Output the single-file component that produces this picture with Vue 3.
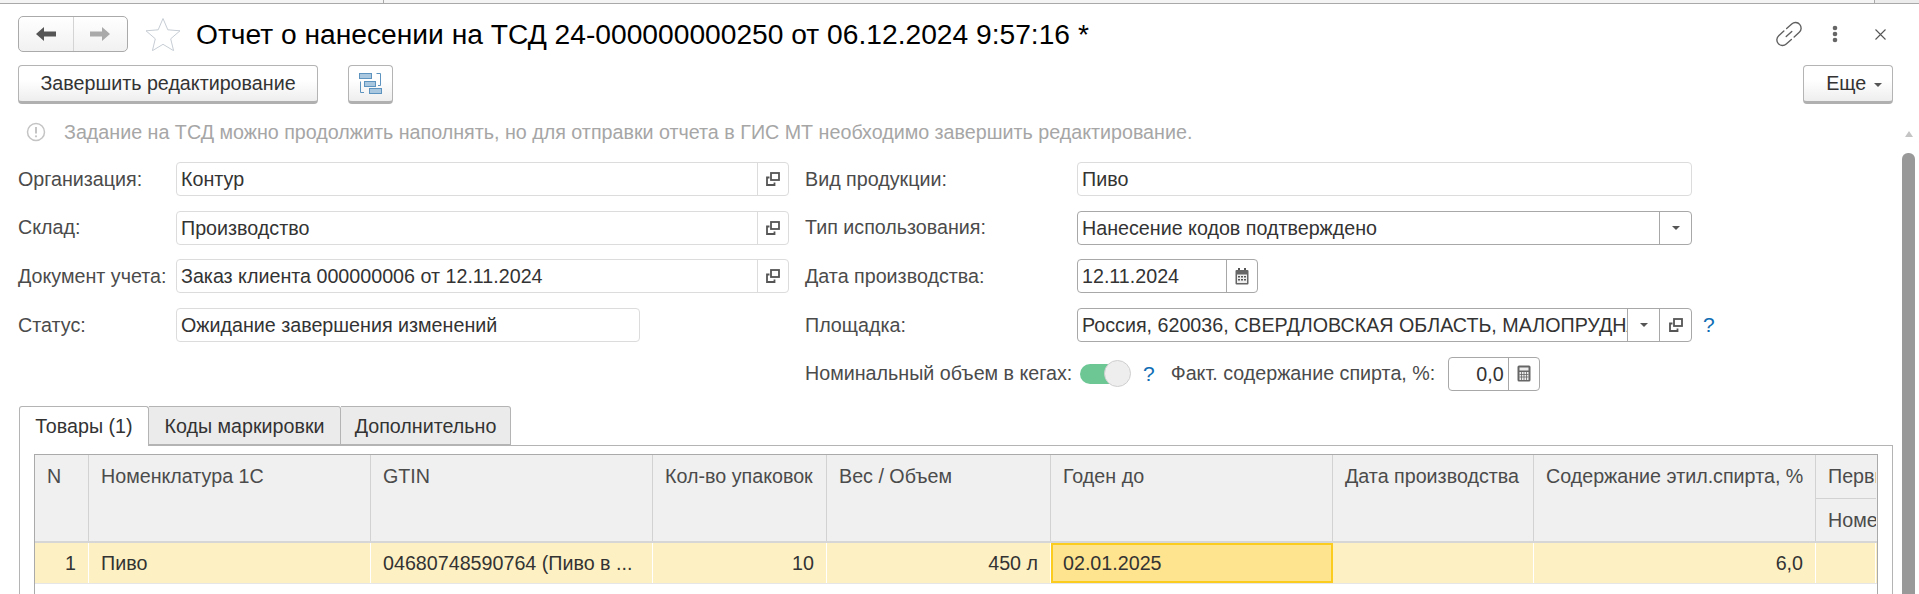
<script setup>
const columns = [
  { title: 'N', value: '1', right: true },
  { title: 'Номенклатура 1С', value: 'Пиво' },
  { title: 'GTIN', value: '04680748590764 (Пиво в ...' },
  { title: 'Кол-во упаковок', value: '10', right: true },
  { title: 'Вес / Объем', value: '450 л', right: true },
  { title: 'Годен до', value: '02.01.2025', active: true },
  { title: 'Дата производства', value: '' },
  { title: 'Содержание этил.спирта, %', value: '6,0', right: true }
]
</script>

<template>
  <div class="page">
    <div class="strip">
      <div class="strip-a"></div>
      <div class="strip-b"></div>
      <div class="strip-c"></div>
    </div>

    <div class="workspace">
      <div class="content">
        <header class="head">
          <div class="nav">
            <button class="nav-btn">
              <svg width="22" height="16" viewBox="0 0 22 16"><path d="M9 1 1 8l8 7v-4.500h12v-5H9z" fill="#555"/></svg>
            </button>
            <button class="nav-btn">
              <svg width="22" height="16" viewBox="0 0 22 16"><path d="M13 1l8 7-8 7v-4.500H1v-5h12z" fill="#aaa"/></svg>
            </button>
          </div>
          <svg class="star" width="36" height="34" viewBox="0 0 36 34"><path d="M18 1.500l4.800 11.300 12.200 1-9.300 8 2.900 11.900L18 27.300 7.400 33.700l2.900-11.900-9.300-8 12.200-1z" fill="#fff" stroke="#c6cdd4"/></svg>
          <h1 class="title">Отчет о нанесении на ТСД 24-000000000250 от 06.12.2024 9:57:16 *</h1>
          <div class="head-icons">
            <svg width="30" height="30" viewBox="0 0 24 24" fill="none" stroke="#5f5f5f" stroke-width="1.100" stroke-linecap="round">
              <g transform="rotate(-42 12 12)">
                <path d="M10.500 7.500H5a4.500 4.500 0 0 0 0 9h5.500"/>
                <path d="M13.500 7.500H19a4.500 4.500 0 0 1 0 9h-5.500"/>
                <path d="M9 12h6"/>
              </g>
            </svg>
            <svg class="dots" width="6" height="18" viewBox="0 0 6 18" fill="#666"><circle cx="3" cy="3" r="2.300"/><circle cx="3" cy="9" r="2.300"/><circle cx="3" cy="15" r="2.300"/></svg>
            <svg class="close" width="11" height="11" viewBox="0 0 11 11" stroke="#555" stroke-width="1.100"><path d="M.5.500l10 10M10.500.500l-10 10"/></svg>
          </div>
        </header>

        <div class="commands">
          <button class="btn btn-finish">Завершить редактирование</button>
          <button class="btn btn-icon">
            <svg width="23" height="21" viewBox="0 0 23 21" fill="none" stroke="#5d94bf">
              <path d="M1.500 8.500v11H5M17.500.500h4v12H19"/>
              <rect x="0.500" y="0.500" width="12" height="5" fill="#a9c8e0"/>
              <rect x="5.500" y="8.500" width="11" height="5" fill="#a9c8e0"/>
              <rect x="10.500" y="15.500" width="12" height="5" fill="#a9c8e0"/>
            </svg>
          </button>
          <button class="btn btn-more">Еще <span class="caret small"></span></button>
        </div>

        <div class="info">
          <svg width="20" height="20" viewBox="0 0 20 20"><circle cx="10" cy="10" r="8.500" fill="#fff" stroke="#c4c4c4" stroke-width="1.500"/><path d="M10 5v6.500" stroke="#c4c4c4" stroke-width="2"/><circle cx="10" cy="14.300" r="1.100" fill="#c4c4c4"/></svg>
          <span>Задание на ТСД можно продолжить наполнять, но для отправки отчета в ГИС МТ необходимо завершить редактирование.</span>
        </div>

        <div class="form">
          <div class="form-col left">
            <div class="row">
              <label class="lbl">Организация:</label>
              <div class="field wide"><span class="val">Контур</span><span class="act"><svg class="open" viewBox="0 0 14 14"><path d="M3.500 5.500h-2.500v7.500h7.500v-2.500"/><rect x="5" y="1" width="8" height="7"/></svg></span></div>
            </div>
            <div class="row">
              <label class="lbl">Склад:</label>
              <div class="field wide"><span class="val">Производство</span><span class="act"><svg class="open" viewBox="0 0 14 14"><path d="M3.500 5.500h-2.500v7.500h7.500v-2.500"/><rect x="5" y="1" width="8" height="7"/></svg></span></div>
            </div>
            <div class="row">
              <label class="lbl">Документ учета:</label>
              <div class="field wide"><span class="val">Заказ клиента 000000006 от 12.11.2024</span><span class="act"><svg class="open" viewBox="0 0 14 14"><path d="M3.500 5.500h-2.500v7.500h7.500v-2.500"/><rect x="5" y="1" width="8" height="7"/></svg></span></div>
            </div>
            <div class="row">
              <label class="lbl">Статус:</label>
              <div class="field status"><span class="val">Ожидание завершения изменений</span></div>
            </div>
          </div>

          <div class="form-col right">
            <div class="row">
              <label class="lbl">Вид продукции:</label>
              <div class="field long"><span class="val">Пиво</span></div>
            </div>
            <div class="row">
              <label class="lbl">Тип использования:</label>
              <div class="field long edit"><span class="val">Нанесение кодов подтверждено</span><span class="act act-drop"><span class="caret"></span></span></div>
            </div>
            <div class="row">
              <label class="lbl">Дата производства:</label>
              <div class="field date edit">
                <span class="val">12.11.2024</span>
                <span class="act act-date">
                  <svg width="14" height="17" viewBox="0 0 14 17"><path d="M3 0h2v3H3zM9 0h2v3H9z" fill="#555"/><rect x="0.500" y="2" width="13" height="14.500" rx="1" fill="#666"/><rect x="2" y="6.500" width="10" height="8.500" fill="#eee"/><path d="M3 8h2v1.500H3zM6 8h2v1.500H6zM9 8h2v1.500H9zM3 11h2v1.500H3zM6 11h2v1.500H6zM9 11h2v1.500H9z" fill="#555"/></svg>
                </span>
              </div>
            </div>
            <div class="row">
              <label class="lbl">Площадка:</label>
              <div class="field long edit">
                <span class="val">Россия, 620036, СВЕРДЛОВСКАЯ ОБЛАСТЬ, МАЛОПРУДНАЯ</span>
                <span class="act act-drop"><span class="caret"></span></span>
                <span class="act act-drop"><svg class="open" viewBox="0 0 14 14"><path d="M3.500 5.500h-2.500v7.500h7.500v-2.500"/><rect x="5" y="1" width="8" height="7"/></svg></span>
              </div>
              <span class="hint hint-place">?</span>
            </div>
            <div class="row">
              <label class="lbl">Номинальный объем в кегах:</label>
              <div class="toggle"><span class="knob"></span></div>
              <span class="hint hint-toggle">?</span>
              <span class="lbl-fact">Факт. содержание спирта, %:</span>
              <div class="field fact edit">
                <span class="val val-num">0,0</span>
                <span class="act act-calc">
                  <svg width="14" height="17" viewBox="0 0 14 17"><rect x="0.500" y="0.500" width="13" height="16" rx="1.500" fill="#666"/><rect x="2.500" y="2.500" width="9" height="3" fill="#eee"/><rect x="2.500" y="7" width="9" height="8" fill="#eee"/><path d="M4.500 7v8M7 7v8M9.500 7v8M2.500 9.500h9M2.500 12h9" stroke="#666" stroke-width=".8"/></svg>
                </span>
              </div>
            </div>
          </div>
        </div>

        <div class="tabs">
          <div class="tab current">Товары (1)</div>
          <div class="tab t2">Коды маркировки</div>
          <div class="tab t3">Дополнительно</div>
        </div>

        <div class="panel">
          <div class="table">
            <div class="grid head-row">
              <div v-for="c in columns" :key="c.title" class="th">{{ c.title }}</div>
              <div class="th th-split">
                <div class="sub">Первичный</div>
                <div class="sub">Номер</div>
              </div>
            </div>
            <div class="grid data-row">
              <div
                v-for="c in columns"
                :key="c.title"
                class="td"
                :class="{ right: c.right, active: c.active }"
              >{{ c.value }}</div>
              <div class="td"></div>
            </div>
          </div>
        </div>
      </div>

      <div class="scrollbar">
        <span class="arrow"></span>
        <div class="thumb"></div>
      </div>
    </div>
  </div>
</template>

<style>
html,
body {
  margin: 0;
  background: #fff;
}
</style>

<style scoped>
.page {
  width: 1919px;
  height: 594px;
  overflow: hidden;
  background: #fff;
  font-family: "Liberation Sans", Arial, sans-serif;
  font-size: 19.7px;
  color: #333;
}

.strip {
  display: flex;
  height: 3px;
  border-bottom: 1px solid #a9a9a9;
}
.strip-a {
  width: 383px;
  background: #f4f4f4;
  border-right: 1px solid #a9a9a9;
}
.strip-b {
  width: 1490px;
  background: #f4f4f4;
  border-right: 1px solid #a9a9a9;
}
.strip-c {
  flex: 1;
  background: #ececec;
}

.workspace {
  display: flex;
}
.content {
  width: 1902px;
  flex: none;
}

.head {
  display: flex;
  align-items: center;
  height: 36px;
  margin-top: 12px;
  padding-left: 18px;
}
.nav {
  display: flex;
  width: 110px;
  height: 36px;
  box-sizing: border-box;
  border: 1px solid #aaa;
  border-radius: 5px;
  background: linear-gradient(#fff, #f1f1f1);
}
.nav-btn {
  flex: 1;
  padding: 0;
  border: 0;
  background: none;
  display: flex;
  align-items: center;
  justify-content: center;
}
.nav-btn + .nav-btn {
  border-left: 1px solid #d4d4d4;
}
.star {
  margin-left: 17px;
}
.title {
  margin: 0 0 0 15px;
  font-size: 28.2px;
  font-weight: 400;
  color: #000;
  white-space: nowrap;
}
.head-icons {
  display: flex;
  align-items: center;
  margin-left: auto;
  margin-right: 16px;
}
.dots {
  margin-left: 28px;
}
.close {
  margin-left: 37px;
}

.commands {
  display: flex;
  margin-top: 13px;
  padding: 0 9px 0 18px;
}
.btn {
  height: 39px;
  box-sizing: border-box;
  padding: 0;
  border: 1px solid #b4b4b4;
  border-bottom: 3px solid #b0b0b0;
  border-radius: 4px;
  background: linear-gradient(#fff 40%, #eee);
  font: inherit;
  color: #333;
}
.btn-finish {
  width: 300px;
}
.btn-icon {
  width: 45px;
  margin-left: 30px;
  display: flex;
  align-items: center;
  justify-content: center;
}
.btn-more {
  width: 90px;
  margin-left: auto;
  padding-left: 12px;
}

.info {
  display: flex;
  align-items: center;
  gap: 18px;
  height: 32px;
  margin-top: 12px;
  margin-bottom: 14px;
  padding-left: 26px;
  color: #a6a6a6;
}

.form {
  display: flex;
  gap: 16px;
  padding-left: 18px;
}
.form-col {
  display: flex;
  flex-direction: column;
  gap: 14.7px;
}
.form-col.left {
  width: 771px;
}
.row {
  display: flex;
  align-items: center;
  height: 34px;
}
.lbl {
  flex: none;
  color: #4b4b4b;
  white-space: nowrap;
}
.left .lbl {
  width: 158px;
}
.right .lbl {
  width: 272px;
}

.field {
  display: flex;
  height: 34px;
  box-sizing: border-box;
  border: 1px solid #dcdcdc;
  border-radius: 4px;
  background: #fff;
  overflow: hidden;
}
.field.edit {
  border-color: #a8a8a8;
}
.field.wide {
  width: 613px;
}
.field.status {
  width: 464px;
}
.field.long {
  width: 615px;
}
.field.date {
  width: 181px;
}
.field.fact {
  width: 92px;
}
.val {
  flex: 1;
  min-width: 0;
  padding-left: 4px;
  line-height: 32px;
  white-space: nowrap;
  overflow: hidden;
  color: #333;
}
.val-num {
  padding: 0 4px 0 0;
  text-align: right;
}
.act {
  flex: none;
  width: 30px;
  display: flex;
  align-items: center;
  justify-content: center;
  border-left: 1px solid #dcdcdc;
}
.edit .act {
  border-left-color: #a8a8a8;
}
.act-drop {
  width: 31px;
}
.open {
  width: 14px;
  height: 14px;
  fill: none;
  stroke: #555;
  stroke-width: 1.800;
}

.caret {
  display: inline-block;
  width: 0;
  height: 0;
  border-left: 4px solid transparent;
  border-right: 4px solid transparent;
  border-top: 4px solid #555;
}
.caret.small {
  vertical-align: 3px;
  margin-left: 2px;
}

.hint {
  color: #0f6eb4;
  font-size: 21px;
}
.hint-place {
  margin-left: 11px;
}
.hint-toggle {
  margin-left: 12px;
}
.toggle {
  position: relative;
  width: 51px;
  height: 20px;
  margin-left: 3px;
  border-radius: 10px 0 0 10px;
  background: linear-gradient(90deg, #6cc795 60%, transparent 60%);
}
.knob {
  position: absolute;
  right: 0;
  top: -4px;
  width: 27px;
  height: 27px;
  box-sizing: border-box;
  border: 1px solid #cfcfcf;
  border-radius: 50%;
  background: #eee;
}
.lbl-fact {
  margin-left: 16px;
  width: 277px;
  flex: none;
  color: #4b4b4b;
  white-space: nowrap;
}

.tabs {
  display: flex;
  height: 39px;
  margin-top: 15px;
  margin-left: 19px;
}
.tab {
  box-sizing: border-box;
  height: 39px;
  padding-top: 8px;
  text-align: center;
  background: #ebebeb;
  border: 1px solid #b4b4b4;
  border-left: 0;
  border-radius: 0 3px 0 0;
  color: #333;
}
.tab.current {
  width: 130px;
  height: 40px;
  background: #fff;
  border-left: 1px solid #b4b4b4;
  border-bottom: 0;
  border-radius: 3px 3px 0 0;
  position: relative;
  z-index: 1;
}
.tab.t2 {
  width: 192px;
}
.tab.t3 {
  width: 170px;
}

.panel {
  height: 149px;
  box-sizing: border-box;
  margin-left: 19px;
  width: 1874px;
  padding: 8px 14px 0;
  border: 1px solid #b4b4b4;
  border-bottom: 0;
}

.table {
  height: 141px;
  box-sizing: border-box;
  border: 1px solid #aaa;
  border-bottom: 0;
  overflow: hidden;
}
.grid {
  display: grid;
  grid-template-columns: 54px 282px 282px 174px 224px 282px 201px 282px 60px;
}
.head-row {
  height: 88px;
  background: #f0f0f0;
  border-bottom: 2px solid #d6d6d6;
  box-sizing: border-box;
}
.th {
  box-sizing: border-box;
  padding: 10px 0 0 12px;
  color: #4b4b4b;
  white-space: nowrap;
  overflow: hidden;
  border-right: 1px solid #d2d2d2;
}
.th-split {
  padding: 0;
  border-right: 0;
}
.sub {
  height: 43px;
  box-sizing: border-box;
  padding: 10px 0 0 12px;
  white-space: nowrap;
  overflow: hidden;
}
.sub:first-child {
  height: 44px;
  border-bottom: 1px solid #d2d2d2;
}
.data-row {
  height: 41px;
  background: #fdf1c3;
  border-bottom: 1px solid #e6e6e6;
  box-sizing: border-box;
}
.td {
  box-sizing: border-box;
  padding: 0 12px;
  line-height: 41px;
  color: #333;
  white-space: nowrap;
  overflow: hidden;
  border-right: 1px solid #fff;
}
.td.right {
  text-align: right;
}
.td.active {
  padding-left: 10px;
  line-height: 37px;
  background: #fee48f;
  border: 2px solid #fbcc1e;
}

.scrollbar {
  width: 13px;
  margin-top: 127px;
  display: flex;
  flex-direction: column;
  align-items: center;
}
.arrow {
  width: 0;
  height: 0;
  border-left: 4px solid transparent;
  border-right: 4px solid transparent;
  border-bottom: 6px solid #c4c4c4;
}
.thumb {
  width: 13px;
  height: 460px;
  margin-top: 16px;
  border-radius: 6px 6px 0 0;
  background: #999;
}
</style>
